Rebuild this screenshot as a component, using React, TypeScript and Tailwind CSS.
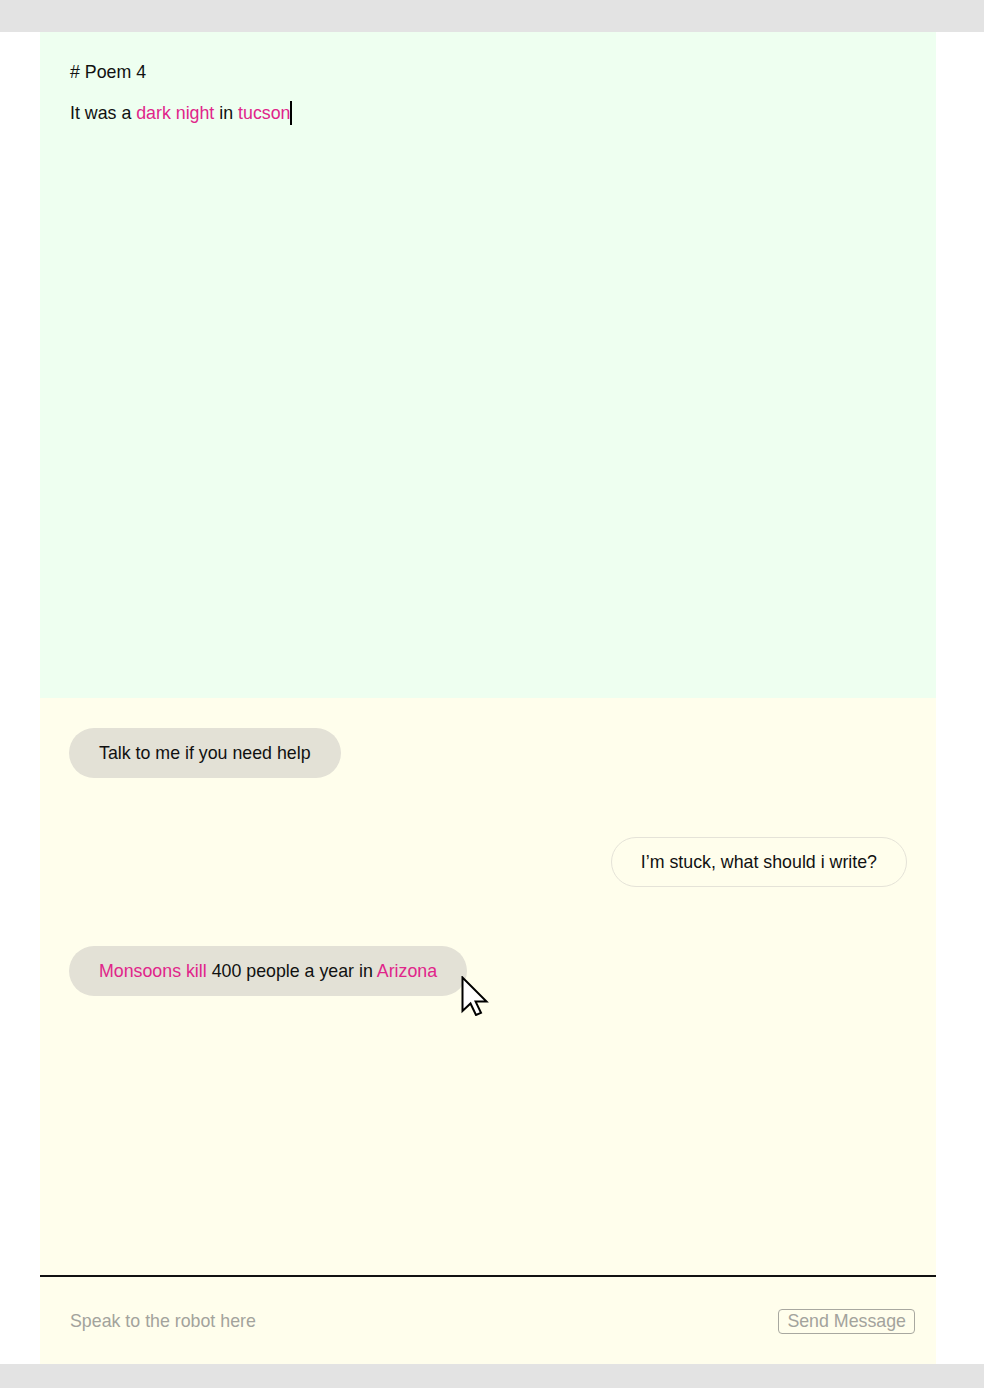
import React from "react";

const pink = "text-[#e0258a]";

function Cursor() {
  return (
    <svg
      width="28"
      height="40"
      viewBox="0 0 28 40"
      className="absolute left-[392px] top-[30px]"
    >
      <path
        d="M1.5 1.5 L1.5 35 L9.5 27.5 L15 39 L20 36.8 L14.6 25.6 L25.5 25.6 Z"
        fill="#fff"
        stroke="#000"
        strokeWidth="2"
        strokeLinejoin="miter"
      />
    </svg>
  );
}

export default function App() {
  return (
    <div className="flex h-[1388px] flex-col bg-white font-['Liberation_Sans',Arial,sans-serif] text-[17.8px] text-[#111]">
      <div className="h-8 shrink-0 bg-[#e3e3e3]" />

      <div className="ml-10 flex w-[896px] flex-1 flex-col">
        <section className="h-[666px] bg-[#eefff0] px-[30px] pt-[29px]">
          <p className="leading-[22px]"># Poem 4</p>
          <p className="mt-[18px] flex items-center leading-[22px]">
            <span className="whitespace-pre">
              It was a <span className={pink}>dark night</span> in{" "}
              <span className={pink}>tucson</span>
            </span>
            <span className="h-6 w-[2px] bg-black" />
          </p>
        </section>

        <section className="flex flex-1 flex-col bg-[#fffeec]">
          <div className="flex flex-1 flex-col gap-[59px] px-[29px] pt-[30px]">
            <div className="self-start rounded-full bg-[#e3e1d6] px-[30px] py-[14px] leading-[22px]">
              Talk to me if you need help
            </div>
            <div className="self-end rounded-full border-[1.5px] border-[#e5e3d8] px-[29px] py-[13px] leading-[22px]">
              I’m stuck, what should i write?
            </div>
            <div className="relative self-start rounded-full bg-[#e3e1d6] px-[30px] py-[14px] leading-[22px]">
              <span className={pink}>Monsoons kill</span> 400 people a year in{" "}
              <span className={pink}>Arizona</span>
              <Cursor />
            </div>
          </div>

          <div className="flex h-[89px] items-center justify-between border-t-2 border-[#111] pl-[30px] pr-[21px] pt-[2px]">
            <span className="text-[#a3a39c]">Speak to the robot here</span>
            <button
              type="button"
              className="rounded-[4px] border-[1.5px] border-[#a8a8a0] px-[8px] leading-[23px] text-[#a3a39c]"
            >
              Send Message
            </button>
          </div>
        </section>
      </div>

      <div className="h-6 shrink-0 bg-[#e3e3e3]" />
    </div>
  );
}
